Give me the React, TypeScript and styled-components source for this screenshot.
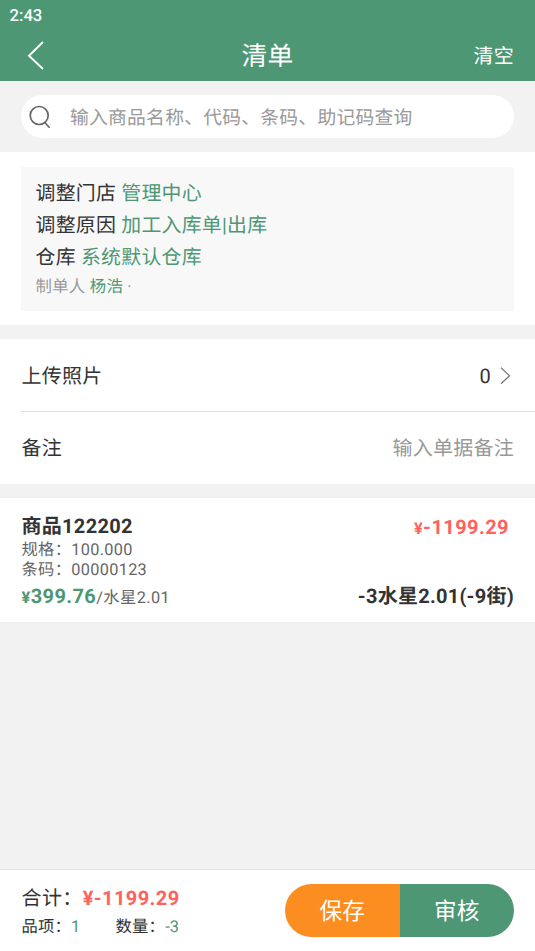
import React from "react";
import styled, { createGlobalStyle } from "styled-components";

const GlobalStyle = createGlobalStyle`
  * { box-sizing: border-box; }
  body {
    margin: 0;
    background: #f2f2f2;
    color: #333;
    font-family: Roboto, "Noto Sans CJK SC", sans-serif;
    text-rendering: geometricPrecision;
    -webkit-font-smoothing: antialiased;
  }
`;

const Screen = styled.div`
  display: flex;
  flex-direction: column;
  width: 535px;
  height: 951px;
  overflow: hidden;
  background: #f2f2f2;
`;

const Header = styled.header`
  height: 81px;
  flex: none;
  background: #4d9775;
  color: #fff;
`;

const StatusBar = styled.div`
  height: 29px;
  padding: 2px 0 0 9.5px;
  font-size: 16.7px;
  font-weight: 500;
  line-height: 30px;
`;

const NavBar = styled.div`
  display: grid;
  grid-template-columns: 1fr auto 1fr;
  align-items: center;
  height: 52px;
  padding: 0 21px 0 27px;
`;

const BackIcon = styled.svg`
  display: block;
  width: 18px;
  height: 30px;
`;

const Title = styled.h1`
  margin: 0;
  padding: 2px 6px 0 0;
  font-size: 25.8px;
  font-weight: 400;
  line-height: 52px;
  letter-spacing: 0.25px;
`;

const ClearAction = styled.span`
  justify-self: end;
  font-size: 20px;
  line-height: 52px;
  letter-spacing: 0.25px;
`;

const SearchArea = styled.div`
  height: 71px;
  flex: none;
  padding: 14px 21px;
`;

const SearchField = styled.div`
  display: flex;
  align-items: center;
  height: 43px;
  padding-left: 8px;
  border-radius: 22px;
  background: #fff;
`;

const SearchIcon = styled.svg`
  width: 23px;
  height: 24px;
  margin-right: 18px;
`;

const Placeholder = styled.span<{ $size: number; $lift: number }>`
  padding-bottom: ${(p) => p.$lift}px;
  color: #999;
  font-size: ${(p) => p.$size}px;
  letter-spacing: 0.25px;
`;

const InfoSection = styled.section`
  height: 173px;
  flex: none;
  padding: 15px 21px 14px;
  background: #fff;
`;

const InfoCard = styled.div`
  height: 144px;
  padding: 11px 15px 0 14.5px;
  background: #f8f8f8;
`;

const InfoLine = styled.div`
  height: 32px;
  font-size: 19.9px;
  line-height: 32px;
  letter-spacing: 0.25px;
`;

const AuthorLine = styled.div`
  height: 28px;
  color: #999;
  font-size: 16.4px;
  line-height: 28px;
  letter-spacing: 0.25px;
`;

const Accent = styled.span`
  color: #4d9775;
`;

const FormSection = styled.section`
  height: 145px;
  flex: none;
  margin-top: 14px;
  padding-left: 21px;
  background: #fff;
`;

const FormRow = styled.div<{ $divider?: boolean }>`
  display: flex;
  align-items: center;
  justify-content: space-between;
  height: ${(p) => (p.$divider ? 73 : 72)}px;
  padding: 0 21px 0 0.5px;
  border-bottom: ${(p) => (p.$divider ? "1px solid #e0e0e0" : "0")};
  font-size: 20px;
  letter-spacing: 0.25px;
`;

const RowLabel = styled.span<{ $lift: number }>`
  padding-bottom: ${(p) => p.$lift}px;
`;

const RowValue = styled.span`
  display: flex;
  align-items: center;
  gap: 8px;
  padding-top: 2px;
`;

const ChevronIcon = styled.svg`
  width: 15px;
  height: 19px;
`;

const ItemSection = styled.section`
  display: grid;
  grid-template-columns: auto auto;
  grid-template-rows: 26px 20px 19px 34px;
  justify-content: space-between;
  height: 124px;
  flex: none;
  margin-top: 14px;
  padding: 16px 21px 0 21.5px;
  background: #fff;
`;

const ItemName = styled.div`
  font-size: 20px;
  font-weight: 700;
  line-height: 24px;
  letter-spacing: 0.3px;
`;

const ItemTotal = styled.div`
  justify-self: end;
  padding-right: 5px;
  color: #ff625d;
  font-size: 20px;
  font-weight: 700;
  line-height: 27px;
  letter-spacing: 0.42px;
`;

const ItemDetail = styled.div`
  grid-column: 1 / -1;
  color: #666;
  font-size: 16.3px;
  line-height: 19px;
  letter-spacing: 0.32px;
`;

const UnitPrice = styled.div`
  color: #666;
  font-size: 16.3px;
  line-height: 34px;
  letter-spacing: 0.4px;
`;

const PriceValue = styled.b`
  color: #4d9775;
  font-size: 20px;
`;

const Currency = styled.span`
  font-size: 16.3px;
`;

const ItemQuantity = styled.div`
  justify-self: end;
  font-size: 20px;
  font-weight: 700;
  line-height: 34px;
  letter-spacing: 0.25px;
`;

const Footer = styled.footer`
  display: flex;
  justify-content: space-between;
  height: 82px;
  flex: none;
  margin-top: auto;
  padding: 14px 21px 0 21.5px;
  border-top: 1px solid #e3e3e3;
  background: #fff;
`;

const Totals = styled.div`
  padding-top: 1px;
`;

const TotalLine = styled.div`
  height: 28px;
  font-size: 20px;
  line-height: 27px;
  letter-spacing: 0.4px;
`;

const TotalAmount = styled.b`
  color: #ff625d;
`;

const CountLine = styled.div`
  display: flex;
  height: 28px;
  gap: 35px;
  font-size: 16.3px;
  line-height: 28px;
  letter-spacing: 0.25px;
`;

const ButtonGroup = styled.div`
  display: flex;
  width: 229px;
  height: 53px;
  overflow: hidden;
  border-radius: 27px;
`;

const ActionButton = styled.button<{ $tone: "save" | "audit" }>`
  flex: 1;
  padding: 0 0 2px;
  border: 0;
  background: ${(p) => (p.$tone === "save" ? "#fc8d20" : "#4d9775")};
  color: #fff;
  font-family: inherit;
  font-size: 22.6px;
  letter-spacing: 0.25px;
`;

export default function App() {
  return (
    <Screen>
      <GlobalStyle />
      <Header>
        <StatusBar>2:43</StatusBar>
        <NavBar>
          <BackIcon viewBox="0 0 18 30" fill="none" stroke="#fff" strokeWidth="1.9">
            <path d="M16 1 2 14.8l14 13.2" />
          </BackIcon>
          <Title>清单</Title>
          <ClearAction>清空</ClearAction>
        </NavBar>
      </Header>

      <SearchArea>
        <SearchField>
          <SearchIcon viewBox="0 0 23 24" fill="none" stroke="#666" strokeWidth="1.7">
            <circle cx="10.2" cy="10.5" r="9" />
            <path d="m15.6 17.2 5 5.6" />
          </SearchIcon>
          <Placeholder $size={18.8} $lift={1}>输入商品名称、代码、条码、助记码查询</Placeholder>
        </SearchField>
      </SearchArea>

      <InfoSection>
        <InfoCard>
          <InfoLine>调整门店 <Accent>管理中心</Accent></InfoLine>
          <InfoLine>调整原因 <Accent>加工入库单|出库</Accent></InfoLine>
          <InfoLine>仓库 <Accent>系统默认仓库</Accent></InfoLine>
          <AuthorLine>制单人 <Accent>杨浩</Accent> ·</AuthorLine>
        </InfoCard>
      </InfoSection>

      <FormSection>
        <FormRow $divider>
          <RowLabel $lift={2}>上传照片</RowLabel>
          <RowValue>
            0
            <ChevronIcon viewBox="0 0 15 19" fill="none" stroke="#777" strokeWidth="1.2">
              <path d="m2 .8 8.5 8L2 16.8" />
            </ChevronIcon>
          </RowValue>
        </FormRow>
        <FormRow>
          <RowLabel $lift={3}>备注</RowLabel>
          <Placeholder $size={20} $lift={3}>输入单据备注</Placeholder>
        </FormRow>
      </FormSection>

      <ItemSection>
        <ItemName>商品122202</ItemName>
        <ItemTotal><Currency>¥</Currency>-1199.29</ItemTotal>
        <ItemDetail>规格：100.000</ItemDetail>
        <ItemDetail>条码：00000123</ItemDetail>
        <UnitPrice><PriceValue><Currency>¥</Currency>399.76</PriceValue>/水星2.01</UnitPrice>
        <ItemQuantity>-3水星2.01(-9街)</ItemQuantity>
      </ItemSection>

      <Footer>
        <Totals>
          <TotalLine>合计：<TotalAmount>¥-1199.29</TotalAmount></TotalLine>
          <CountLine>
            <span>品项：<Accent>1</Accent></span>
            <span>数量：<Accent>-3</Accent></span>
          </CountLine>
        </Totals>
        <ButtonGroup>
          <ActionButton $tone="save">保存</ActionButton>
          <ActionButton $tone="audit">审核</ActionButton>
        </ButtonGroup>
      </Footer>
    </Screen>
  );
}
